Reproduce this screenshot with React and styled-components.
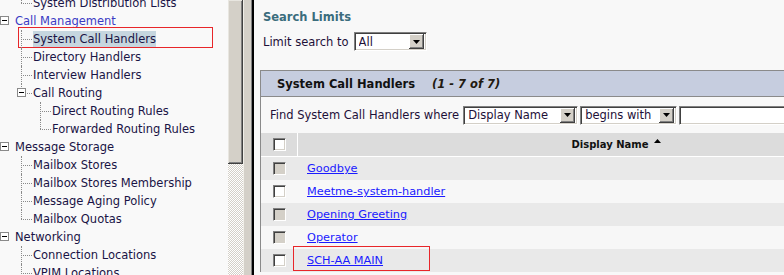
import React from "react";
import styled, { createGlobalStyle, css } from "styled-components";

const GlobalStyle = createGlobalStyle`
  html, body {
    margin: 0;
    padding: 0;
    background: #f8f8f8;
  }
  body {
    width: 784px;
    height: 275px;
    overflow: hidden;
    font-family: "DejaVu Sans", Verdana, sans-serif;
    font-size: 11.5px;
    color: #1a1446;
  }
`;

const Frame = styled.div`
  display: flex;
  width: 784px;
  height: 275px;
  overflow: hidden;
`;

/* ---------- left tree ---------- */

const TreePane = styled.div`
  width: 228px;
  flex: none;
  background: #f9f9f9;
  overflow: hidden;
`;

const Tree = styled.div`
  margin-top: -6px;
`;

const levels = {
  1: { line: null, text: 15 },
  2: { line: 21, text: 33 },
  3: { line: 40, text: 52 },
};

const TreeRow = styled.div`
  position: relative;
  height: 18px;
  line-height: 18px;
  white-space: nowrap;
  padding-left: ${({ $text }) => $text}px;
  color: ${({ $accent }) => ($accent ? "#3b3bc4" : "#1a1446")};

  ${({ $line, $text, $last }) =>
    $line != null &&
    css`
      &::before {
        content: "";
        position: absolute;
        left: ${$line}px;
        top: 9px;
        width: ${$text - $line - 1}px;
        border-top: 1px dotted #8a8a8a;
      }
      &::after {
        content: "";
        position: absolute;
        left: ${$line}px;
        top: 0;
        height: ${$last ? 9 : 18}px;
        border-left: 1px dotted #8a8a8a;
      }
    `}
`;

const Expander = styled.span`
  position: absolute;
  z-index: 1;
  left: ${({ $x }) => $x}px;
  top: 4px;
  width: 7px;
  height: 7px;
  border: 1px solid #8a8a8a;
  background: #fff;
  &::after {
    content: "";
    position: absolute;
    left: 1px;
    top: 3px;
    width: 5px;
    height: 1px;
    background: #000;
  }
`;

const Selected = styled.span`
  background: #c6d6df;
  padding: 1px 0;
`;

const Annotation = styled.span`
  position: absolute;
  border: 1px solid #e8262a;
  pointer-events: none;
`;

const ScrollBar = styled.div`
  width: 15px;
  flex: none;
  display: flex;
  flex-direction: column;
  background: repeating-conic-gradient(#d4d0c8 0 25%, #ffffff 0 50%) 0 0 / 2px 2px;
`;

const Thumb = styled.div`
  height: 164px;
  background: #d4d0c8;
  box-shadow: inset -1px -1px #404040, inset 1px 1px #e8e6e0,
    inset -2px -2px #808080;
`;

const Splitter = styled.div`
  width: 11px;
  flex: none;
  box-sizing: border-box;
  background: #d4d0c8;
  border-left: 1px solid #f0eee8;
  border-right: 2px solid #000;
  box-shadow: inset -1px 0 #808080;
`;

/* ---------- right content ---------- */

const Content = styled.div`
  flex: 1;
  min-width: 0;
  background: #f8f8f8;
  padding: 9px 0 0 6px;
  overflow: hidden;
`;

const SectionTitle = styled.div`
  margin-left: 3px;
  font-weight: bold;
  font-size: 11.5px;
  line-height: 16px;
  color: #3b6d7d;
`;

const LimitRow = styled.div`
  display: flex;
  align-items: center;
  gap: 5px;
  margin: 7px 0 0 3px;
  color: #1e1038;
`;

const SelectBox = styled.div`
  display: flex;
  align-items: center;
  box-sizing: border-box;
  width: ${({ $w }) => $w}px;
  height: 19px;
  flex: none;
  background: #fff;
  border-top: 1px solid #808080;
  border-left: 1px solid #808080;
  border-bottom: 1px solid #fff;
  border-right: 1px solid #fff;
  box-shadow: inset 1px 1px #404040, inset -1px -1px #d4d0c8;
  padding: 2px 2px 2px 4px;
  color: #1e1038;
`;

const SelectText = styled.span`
  flex: 1;
  white-space: nowrap;
  overflow: hidden;
`;

const ArrowButton = styled.span`
  width: 15px;
  height: 15px;
  flex: none;
  display: flex;
  align-items: center;
  justify-content: center;
  background: #d4d0c8;
  box-shadow: inset -1px -1px #404040, inset 1px 1px #fff,
    inset -2px -2px #808080;
`;

const TextField = styled(SelectBox)`
  flex: 1;
  width: auto;
`;

function Select({ width, value }) {
  return (
    <SelectBox $w={width}>
      <SelectText>{value}</SelectText>
      <ArrowButton>
        <svg width="7" height="4" viewBox="0 0 7 4">
          <polygon points="0,0 7,0 3.5,4" fill="#000" />
        </svg>
      </ArrowButton>
    </SelectBox>
  );
}

const Panel = styled.div`
  margin-top: 19px;
  width: 673px;
  border-left: 1px solid #8a8a8a;
`;

const PanelHeader = styled.div`
  height: 25px;
  display: flex;
  align-items: center;
  padding-left: 16px;
  background: #c6cddf;
  border-top: 1px solid #8a8a8a;
  border-bottom: 1px solid #8a8a8a;
  font-weight: bold;
  font-size: 11.5px;
  color: #111;
`;

const Count = styled.span`
  margin-left: 17px;
  font-style: italic;
  color: #221a10;
`;

const FindRow = styled.div`
  height: 36px;
  display: flex;
  align-items: center;
  gap: 2px;
  padding-left: 9px;
  background: #f8f8f8;
  color: #1e1038;
`;

const FindLabel = styled.span`
  margin-right: 2px;
  white-space: nowrap;
`;

const Grid = styled.div`
  display: grid;
  grid-template-columns: 37px 1fr;
`;

const HeadCell = styled.div`
  height: 23px;
  display: flex;
  align-items: center;
  justify-content: center;
  background: #dcdcdc;
  border-bottom: 1px solid #fff;
  ${({ $sep }) => $sep && "border-right: 1px solid #fff;"}
  font-weight: bold;
  font-size: 10px;
  color: #111;
`;

const SortArrow = styled.span`
  margin: -7px 0 0 5px;
  display: inline-flex;
`;

const Cell = styled.div`
  position: relative;
  height: 23px;
  display: flex;
  align-items: center;
  background: ${({ $odd }) => ($odd ? "#e9e9e9" : "#f7f7f7")};
  ${({ $center }) => ($center ? "justify-content: center;" : "padding-left: 9px;")}
`;

const Check = styled.span`
  width: 13px;
  height: 13px;
  box-sizing: border-box;
  background: ${({ $disabled }) => ($disabled ? "#d4d0c8" : "#fff")};
  border-top: 1px solid #808080;
  border-left: 1px solid #808080;
  border-bottom: 1px solid #fff;
  border-right: 1px solid #fff;
  box-shadow: inset 1px 1px #404040, inset -1px -1px #d4d0c8;
`;

const Link = styled.a`
  color: #1a1aff;
  font-size: 11.3px;
  text-decoration: underline;
  white-space: nowrap;
`;

const handlers = [
  { name: "Goodbye", disabled: true },
  { name: "Meetme-system-handler", disabled: false },
  { name: "Opening Greeting", disabled: true },
  { name: "Operator", disabled: true },
  { name: "SCH-AA MAIN", disabled: false, marked: true },
];

const tree = [
  { label: "System Distribution Lists", level: 2, last: true },
  { label: "Call Management", level: 1, open: true, accent: true },
  { label: "System Call Handlers", level: 2, selected: true },
  { label: "Directory Handlers", level: 2 },
  { label: "Interview Handlers", level: 2 },
  { label: "Call Routing", level: 2, last: true, open: true },
  { label: "Direct Routing Rules", level: 3 },
  { label: "Forwarded Routing Rules", level: 3, last: true },
  { label: "Message Storage", level: 1, open: true },
  { label: "Mailbox Stores", level: 2 },
  { label: "Mailbox Stores Membership", level: 2 },
  { label: "Message Aging Policy", level: 2 },
  { label: "Mailbox Quotas", level: 2, last: true },
  { label: "Networking", level: 1, open: true },
  { label: "Connection Locations", level: 2 },
  { label: "VPIM Locations", level: 2 },
];

export default function App() {
  return (
    <>
      <GlobalStyle />
      <Frame>
        <TreePane>
          <Tree>
            {tree.map((item) => {
              const lv = levels[item.level];
              return (
                <TreeRow
                  key={item.label}
                  $text={lv.text}
                  $line={lv.line}
                  $last={item.last}
                  $accent={item.accent}
                >
                  {item.open && (
                    <Expander $x={lv.line == null ? 0 : lv.line - 4} />
                  )}
                  {item.selected ? (
                    <>
                      <Selected>{item.label}</Selected>
                      <Annotation
                        style={{ left: 18, top: -3, width: 193, height: 19 }}
                      />
                    </>
                  ) : (
                    item.label
                  )}
                </TreeRow>
              );
            })}
          </Tree>
        </TreePane>
        <ScrollBar>
          <Thumb />
        </ScrollBar>
        <Splitter />

        <Content>
          <SectionTitle>Search Limits</SectionTitle>
          <LimitRow>
            Limit search to
            <Select width={73} value="All" />
          </LimitRow>

          <Panel>
            <PanelHeader>
              System Call Handlers
              <Count>(1 - 7 of 7)</Count>
            </PanelHeader>
            <FindRow>
              <FindLabel>Find System Call Handlers where</FindLabel>
              <Select width={115} value="Display Name" />
              <Select width={97} value="begins with" />
              <TextField />
            </FindRow>

            <Grid>
              <HeadCell $sep>
                <Check />
              </HeadCell>
              <HeadCell>
                Display Name
                <SortArrow>
                  <svg width="7" height="4" viewBox="0 0 7 4">
                    <polygon points="0,4 7,4 3.5,0" fill="#000" />
                  </svg>
                </SortArrow>
              </HeadCell>
              {handlers.map((h, i) => (
                <React.Fragment key={h.name}>
                  <Cell $odd={i % 2 === 0} $center>
                    <Check $disabled={h.disabled} />
                  </Cell>
                  <Cell $odd={i % 2 === 0}>
                    <Link href="#">{h.name}</Link>
                    {h.marked && (
                      <Annotation
                        style={{ left: -5, top: -3, width: 135, height: 23 }}
                      />
                    )}
                  </Cell>
                </React.Fragment>
              ))}
            </Grid>
          </Panel>
        </Content>
      </Frame>
    </>
  );
}
